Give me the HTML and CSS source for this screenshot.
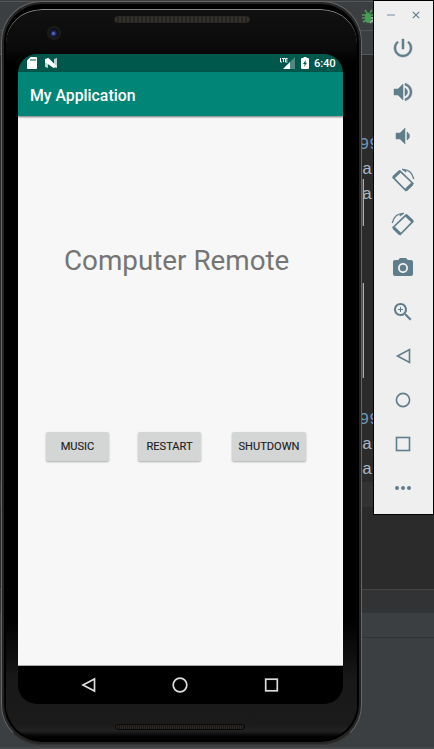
FILE: index.html
```
<!DOCTYPE html>
<html lang="en">
<head>
<meta charset="utf-8">
<title>Android Emulator</title>
<link rel="stylesheet" href="styles.css">
</head>
<body>
<div class="desktop">
  <div class="ide">
    <div class="ide-menu"></div>
    <div class="ide-tools">
      <svg class="bug" viewBox="0 0 14 16"><path d="M3 1l2 3M10 1L8 4M0 6h12M0 9h12M1 13l3-2M11 13l-3-2" stroke="#499c54" stroke-width="1.6"/><path d="M3 6q3-5 6 0v6q-3 4-6 0z" fill="#499c54"/><path d="M8 14l5-5M9 9h4v5" fill="none" stroke="#afb1b3" stroke-width="1.5"/></svg>
    </div>
    <div class="ide-tabs"></div>
    <div class="editor">
      <div class="code first"><span class="num">99</span><span>a</span><span>a</span></div>
      <div class="code second"><span class="num">99</span><span>a</span><span>a</span></div>
      <div class="caret-row"></div>
    </div>
    <div class="crumbs"></div>
    <div class="panel-head"></div>
    <div class="panel"></div>
    <div class="ide-foot"></div>
  </div>

  <div class="phone">
    <div class="bezel">
      <div class="speaker"></div>
      <div class="lens"></div>
      <div class="screen">
        <div class="status">
          <svg class="sd" viewBox="0 0 10 12"><path d="M3.500 0H9q1 0 1 1v10q0 1-1 1H1q-1 0-1-1V3.500z" fill="#fff"/><path d="M4 2v2M6 2v2M8 2v2" stroke="#00574b"/></svg>
          <svg class="nlogo" viewBox="0 0 12 10"><path d="M0 1l3-1v10l-3-1zM9 1l3-1v10l-3-1z" fill="#b9d2ce"/><path d="M0 1.500L3.500 0 12 8.500 8.500 10 0 4z" fill="#fff"/></svg>
          <span class="spacer"></span>
          <svg class="signal" viewBox="0 0 15 12"><path d="M15 0v12H3z" fill="#4d897f"/><path d="M10 5v7H3z" fill="#fff"/><path d="M.5 1v4H2M2 1.500h3M3.500 1.500V5M7.500 1.500h-2V5h2M5.500 3h2" fill="none" stroke="#fff"/></svg>
          <svg class="battery" viewBox="0 0 8 12"><path d="M2.500 0h3v1H7q1 0 1 1v9q0 1-1 1H1q-1 0-1-1V2q0-1 1-1h1.500z" fill="#fff"/><path d="M5 2.500L2 7h1.700L3 10l3-4.300H4.300z" fill="#00574b"/></svg>
          <span class="clock">6:40</span>
        </div>
        <div class="appbar">My Application</div>
        <div class="content">
          <h1>Computer Remote</h1>
          <div class="buttons">
            <button class="btn music">MUSIC</button>
            <button class="btn restart">RESTART</button>
            <button class="btn shutdown">SHUTDOWN</button>
          </div>
        </div>
        <div class="nav">
          <svg viewBox="0 0 16 16"><path d="M13.500 2v12L2 8z"/></svg>
          <svg viewBox="0 0 16 16"><circle cx="8" cy="8" r="6.800"/></svg>
          <svg viewBox="0 0 16 16"><rect x="2.700" y="2.200" width="11.600" height="11.600"/></svg>
        </div>
      </div>
      <div class="speaker bottom"></div>
    </div>
  </div>
  <div class="side-key power-key"></div>
  <div class="side-key volume-key"></div>

  <div class="toolbar">
    <div class="window-controls">
      <svg viewBox="0 0 8 8"><path d="M0 4h8" stroke="#9db0b9" stroke-width="1.500"/></svg>
      <svg viewBox="0 0 8 8"><path d="M.8.8l6.400 6.400M7.200.8L.8 7.200" stroke="#607d8b" stroke-width="1.200"/></svg>
    </div>
    <div class="tool"><svg viewBox="0 0 24 24"><path stroke="#607d8b" stroke-width=".5" d="M13 3h-2v10h2V3zm4.830 2.170l-1.420 1.420C17.990 7.860 19 9.810 19 12c0 3.870-3.130 7-7 7s-7-3.130-7-7c0-2.190 1.010-4.140 2.580-5.420L6.170 5.170C4.230 6.820 3 9.260 3 12c0 4.970 4.030 9 9 9s9-4.030 9-9c0-2.740-1.230-5.180-3.170-6.830z"/></svg></div>
    <div class="tool"><svg viewBox="0 0 24 24"><path stroke="#607d8b" stroke-width=".5" d="M3 9v6h4l5 5V4L7 9H3zm13.500 3c0-1.770-1.020-3.290-2.500-4.030v8.050c1.480-.73 2.500-2.250 2.500-4.020zM14 3.230v2.060c2.890.86 5 3.540 5 6.710s-2.110 5.850-5 6.710v2.060c4.010-.91 7-4.490 7-8.770s-2.990-7.860-7-8.770z"/></svg></div>
    <div class="tool"><svg viewBox="0 0 24 24"><path stroke="#607d8b" stroke-width=".5" d="M5 9v6h4l5 5V4L9 9H5zm13.500 3c0-1.770-1.020-3.290-2.500-4.030v8.050c1.480-.73 2.500-2.250 2.500-4.020z"/></svg></div>
    <div class="tool rotate"><svg viewBox="0 0 24 24"><path class="body" d="M8.800 2.800L2 9.300 14.800 22.500 22 15.500z"/><path class="ends" d="M8.800 3.500L2.800 9.200M21.200 15.800L15 21.800"/><path class="arc" d="M11 1.300Q20.500 1 22.800 11M11.500 1.300l3.800 2.600"/></svg></div>
    <div class="tool rotate"><svg class="mirror" viewBox="0 0 24 24"><path class="body" d="M8.800 2.800L2 9.300 14.800 22.500 22 15.500z"/><path class="ends" d="M8.800 3.500L2.800 9.200M21.200 15.800L15 21.800"/><path class="arc" d="M11 1.300Q20.500 1 22.800 11M11.500 1.300l3.800 2.600"/></svg></div>
    <div class="tool"><svg viewBox="0 0 24 24"><circle cx="12" cy="12" r="3.200"/><path d="M9 2L7.170 4H4c-1.100 0-2 .9-2 2v12c0 1.100.9 2 2 2h16c1.100 0 2-.9 2-2V6c0-1.100-.9-2-2-2h-3.170L15 2H9zm3 15c-2.760 0-5-2.240-5-5s2.240-5 5-5 5 2.240 5 5-2.240 5-5 5z"/></svg></div>
    <div class="tool"><svg viewBox="0 0 24 24"><path d="M15.500 14h-.79l-.28-.27C15.410 12.590 16 11.110 16 9.500 16 5.910 13.090 3 9.500 3S3 5.910 3 9.500 5.910 16 9.500 16c1.610 0 3.090-.59 4.230-1.570l.27.28v.79l5 4.990L20.490 19l-4.990-5zm-6 0C7.010 14 5 11.990 5 9.500S7.010 5 9.500 5 14 7.010 14 9.500 11.990 14 9.500 14zm2.500-4h-2v2H9v-2H7V9h2V7h1v2h2v1z"/></svg></div>
    <div class="tool line"><svg viewBox="0 0 24 24"><path d="M18.500 5.500v13L6.500 12z"/></svg></div>
    <div class="tool line"><svg viewBox="0 0 24 24"><circle cx="12" cy="12" r="6.600"/></svg></div>
    <div class="tool line"><svg viewBox="0 0 24 24"><rect x="5.500" y="5.500" width="13" height="13"/></svg></div>
    <div class="tool"><svg viewBox="0 0 24 24"><circle cx="6" cy="12" r="2"/><circle cx="12" cy="12" r="2"/><circle cx="18" cy="12" r="2"/></svg></div>
  </div>
</div>
</body>
</html>
```
FILE: styles.css
```
* { box-sizing: border-box; }
body { margin: 0; font-family: Roboto, sans-serif; }
svg { display: block; flex: none; }

.desktop { position: relative; width: 434px; height: 749px; overflow: hidden; background: #3c3f41; }

.ide { height: 749px; display: flex; flex-direction: column; }
.ide-menu { height: 2px; border-bottom: 1px solid #555; }
.ide-tools { height: 29px; padding: 7px 0 0 362px; border-bottom: 1px solid #515151; }
.bug { width: 14px; height: 16px; }
.ide-tabs { height: 24px; border-bottom: 1px solid #555; }
.editor { height: 534px; background: #2b2b2b; padding-top: 77px; }
.code { display: flex; flex-direction: column; height: 75px; padding-left: 362px; font: 17px/25px "Liberation Mono", monospace; color: #a9b7c6; }
.code .num { color: #6897bb; margin-left: -3px; }
.code span { display: block; }
.code.second { margin-top: 200px; }
.caret-row { height: 25px; background: #323232; }
.crumbs { height: 24px; background: #313335; border-top: 1px solid #444; }
.panel-head { height: 25px; background: #3c3f41; border-bottom: 1px solid #323232; }
.panel { flex: 1; background: #3c3f41; }
.ide-foot { height: 2px; background: #46484a; }

.phone { position: absolute; left: 1px; top: 1px; width: 361px; height: 744px; padding: 2px; border-radius: 40px; background: #252525; border: 1px solid #666; border-bottom-color: #333; }
.bezel { height: 738px; padding: 7px 11px 0 12px; border: 0 solid #000; border-width: 5px 2px 2px; border-radius: 38px; background: linear-gradient(#111 0, #0a0a0a 40px, #000 54px, #000 610px, #181818 670px, #1b1b1b 716px, #222 722px, #050505 727px, #000); box-shadow: inset 0 1px 0 #888; }
.speaker { width: 136px; height: 7px; margin: 0 auto; border-radius: 4px; border: 1px solid #292826; background: repeating-linear-gradient(90deg, #35322c 0 2px, #25231f 2px 4px); }
.speaker.bottom { width: 130px; height: 6px; margin: 20px 0 0 97px; border-color: #090909; background: repeating-linear-gradient(90deg, #2d2a25 0 1px, #171614 1px 2px); }
.lens { width: 14px; height: 14px; margin: 3px 0 14px 29px; border-radius: 50%; border: 2px solid #1c1c1c; background: radial-gradient(circle at 45% 55%, #5362ba 0 1px, #252a65 2px, #101018 4px); }

.screen { width: 325px; height: 650px; border-radius: 19px; overflow: hidden; display: flex; flex-direction: column; background: #000; }
.status { height: 18px; background: #00574b; display: flex; align-items: center; padding: 0 7px 0 9px; color: #fff; }
.sd { width: 10px; height: 12px; }
.nlogo { width: 12px; height: 10px; margin-left: 8px; }
.spacer { flex: 1; }
.signal { width: 15px; height: 12px; }
.battery { width: 8px; height: 12px; margin: 0 5px 0 6px; }
.clock { width: 22px; padding-top: 1px; font-size: 11.3px; font-weight: 500; line-height: 20px; letter-spacing: -.15px; }
.appbar { position: relative; height: 44px; line-height: 48px; padding-left: 12px; background: #008577; color: #fff; font-size: 15.8px; font-weight: 500; box-shadow: 0 1px 2px rgba(0,0,0,.55); }
.content { height: 550px; background: #f7f7f7; border-bottom: 1px solid #aaa; padding-top: 125px; }
h1 { margin: 0; padding-left: 46px; height: 40px; font-size: 27.8px; font-weight: 400; line-height: 40px; color: #757575; white-space: nowrap; }
.buttons { display: flex; padding-left: 28px; margin-top: 151px; }
.btn { height: 29px; padding: 1px 0 0; border: 0; border-radius: 2px; background: #d4d6d5; color: #222; font: 400 11.1px/28px Roboto, sans-serif; -webkit-text-stroke: .15px #222; box-shadow: 0 1px 2px rgba(0,0,0,.3); white-space: nowrap; }
.music { width: 63px; }
.restart { width: 63px; margin-left: 29px; }
.shutdown { width: 74px; margin-left: 31px; }
.nav { height: 38px; display: flex; align-items: center; justify-content: space-between; padding: 0 64px 0 63px; }
.nav svg { width: 16px; height: 16px; fill: none; stroke: #ddd; stroke-width: 1.7; }

.side-key { position: absolute; left: 362px; width: 2px; background: #55504f; border-right: 1px solid #b1acac; }
.power-key { top: 179px; height: 47px; }
.volume-key { top: 283px; height: 95px; }

.toolbar { position: absolute; left: 373px; top: 0; width: 61px; height: 515px; border: 1px solid #000; background: #efefef; }
.window-controls { height: 25px; display: flex; gap: 17px; padding: 10px 0 0 13px; }
.window-controls svg { width: 8px; height: 8px; }
.tool { height: 44px; padding-left: 17px; display: flex; align-items: center; }
.tool svg { width: 24px; height: 24px; fill: #607d8b; overflow: visible; }
.rotate svg { fill: none; stroke: #607d8b; stroke-linejoin: round; }
.rotate .body { stroke-width: 1.7; }
.rotate .ends { stroke-width: 3; }
.rotate .arc { stroke-width: 1.3; }
.tool .mirror { transform: scaleX(-1); }
.tool.line svg { fill: none; stroke: #607d8b; stroke-width: 1.6; }
```
